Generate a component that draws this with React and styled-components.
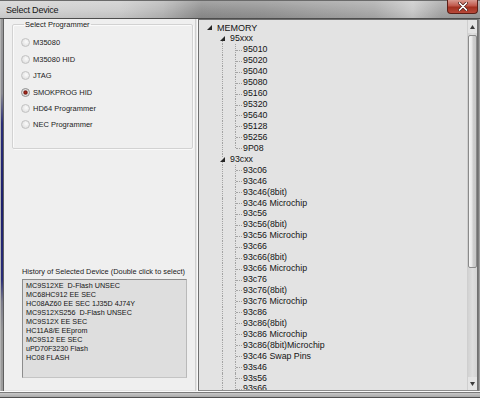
import React from 'react';
import styled, { createGlobalStyle } from 'styled-components';

const Global = createGlobalStyle`
  html, body { margin: 0; padding: 0; background: #fff; }
  body { width: 480px; height: 398px; overflow: hidden; }
  * { box-sizing: border-box; }
`;

const Window = styled.div`
  width: 480px;
  height: 398px;
  display: flex;
  flex-direction: column;
  background: #9c9c9c;
  overflow: hidden;
  font-family: "Liberation Sans", Arial, sans-serif;
`;

const TitleBar = styled.div`
  height: 19px;
  flex: none;
  display: flex;
  justify-content: space-between;
  align-items: flex-start;
  padding-left: 6px;
  border-top: 1px solid #6a6a6a;
  border-bottom: 1px solid #4d4d4d;
  background:
    linear-gradient(180deg, rgba(255,255,255,0.22) 0%, rgba(255,255,255,0.05) 55%, rgba(0,0,0,0.05) 100%),
    linear-gradient(90deg, #d2d2d2 0%, #cbcbcb 25%, #b5b5b5 34%, #8c8c8c 42%, #929292 55%, #9e9e9e 66%, #a9a9a9 78%, #c8c8c8 86%, #a4a4a4 92%, #9c9c9c 100%);
`;

const Title = styled.span`
  align-self: center;
  font-size: 9px;
  color: #141414;
  letter-spacing: -0.2px;
`;

const CloseButton = styled.div`
  width: 31px;
  height: 14px;
  margin-top: -1px;
  margin-right: 2px;
  border: 1px solid #5b1e16;
  border-top: none;
  border-radius: 0 0 4px 4px;
  background: linear-gradient(180deg, #d89a90 0%, #c0574a 45%, #a2301f 55%, #b8493a 100%);
  display: flex;
  align-items: center;
  justify-content: center;
`;

const Main = styled.div`
  flex: 1;
  min-height: 0;
  display: flex;
`;

const FrameLeft = styled.div`
  width: 4px;
  flex: none;
  border-left: 1px solid #b4b4b4;
  border-right: 1px solid #5f5f5f;
  background: linear-gradient(180deg, #9a9a9a 0%, #8a8a92 20%, #2a2d78 28%, #1d206c 50%, #2a2d78 70%, #7b7b8a 76%, #979797 84%, #9c9c9c 100%);
`;

const FrameRight = styled.div`
  width: 2px;
  flex: none;
  background: linear-gradient(90deg, #6a6a6a, #b0b0b0);
`;

const FrameBottom = styled.div`
  height: 7px;
  flex: none;
  border-top: 1px solid #fafafa;
  border-bottom: 1px solid #505050;
  background: linear-gradient(180deg, #7a7a7a 0%, #7a7a7a 14%, #c4c4c4 30%, #a8a8a8 100%);
`;

const LeftPane = styled.div`
  width: 191px;
  flex: none;
  display: flex;
  flex-direction: column;
  background: #efefef;
  padding: 1px 2px 12px 8px;
  border-bottom: 1px solid #e2e2e2;
`;

const GroupBox = styled.fieldset`
  margin: 0;
  padding: 5.8px 0 15px 8px;
  border: 1px solid #d2d2d2;
  box-shadow: inset 1px 1px 0 #fafafa, 1px 1px 0 #fafafa;
  border-radius: 2px;
  min-width: 0;
`;

const Legend = styled.legend`
  font-size: 7.5px;
  line-height: 9px;
  color: #1a1a1a;
  padding: 0 1px;
  margin-left: 3px;
`;

const RadioRow = styled.label`
  height: 16.4px;
  display: flex;
  align-items: center;
  gap: 3px;
  font-size: 7.5px;
  color: #1c1c1c;
`;

const RadioDot = styled.span`
  width: 9px;
  height: 9px;
  border-radius: 50%;
  flex: none;
  border: 1px solid ${p => (p.$checked ? '#8d8d8d' : '#c2c2c2')};
  background: ${p =>
    p.$checked
      ? 'radial-gradient(circle at 50% 50%, #b02a1c 0, #7a1a12 1.6px, #d9d9d9 2.6px, #f2f2f2 4px)'
      : 'radial-gradient(circle at 60% 40%, #fbfbfb 0, #e6e6e6 60%, #cfcfcf 100%)'};
`;

const HistorySection = styled.div`
  margin-top: auto;
  padding-left: 10px;
  padding-right: 6px;
  display: flex;
  flex-direction: column;
  gap: 3.5px;
`;

const HistoryLabel = styled.div`
  font-size: 7.4px;
  line-height: 9px;
  color: #1a1a1a;
  white-space: nowrap;
`;

const HistoryList = styled.div`
  height: 99px;
  background: #dedede;
  border: 1px solid #8c8c8c;
  border-right-color: #b9b9b9;
  border-bottom-color: #c4c4c4;
  padding: 1px 3px;
`;

const HistoryItem = styled.div`
  font-size: 7.2px;
  line-height: 9px;
  color: #151515;
  white-space: pre;
`;

const Splitter = styled.div`
  width: 3px;
  flex: none;
  background: #e6e6e6;
  border-left: 1px solid #d0d0d0;
  border-right: 1px solid #fbfbfb;
`;

const TreePane = styled.div`
  width: 280px;
  flex: none;
  display: flex;
  border: 1px solid #707070;
  border-bottom-color: #8c8c8c;
  background: #e3e3e3;
`;

const TreeContent = styled.div`
  flex: 1;
  min-width: 0;
  overflow: hidden;
  padding: 2.5px 0 0 3.5px;
`;

const Row = styled.div`
  height: 10.95px;
  display: flex;
  align-items: stretch;
  font-family: "Liberation Sans", Arial, sans-serif;
  font-size: ${p => (p.$top ? '9px' : '8.8px')};
  color: #141414;
  white-space: nowrap;
`;

const Cell = styled.span`
  width: 13px;
  flex: none;
  position: relative;
  display: flex;
  align-items: center;
  justify-content: center;
  &::before {
    content: '';
    position: absolute;
    left: 6px;
    top: ${p => (p.$kind === 'down' ? '50%' : '0')};
    bottom: ${p => (p.$kind === 'last' ? '50%' : '0')};
    border-left: 1px dotted #a3a3a3;
    display: ${p => (p.$kind === 'none' || p.$kind === 'exp' ? 'none' : 'block')};
  }
  &::after {
    content: '';
    position: absolute;
    left: 7px;
    width: 6px;
    top: 50%;
    border-top: 1px dotted #a3a3a3;
    display: ${p => (p.$kind === 'tee' || p.$kind === 'last' ? 'block' : 'none')};
  }
`;

const ExpGlyph = styled.svg`
  position: relative;
  z-index: 1;
  background: #e3e3e3;
`;

const Label = styled.span`
  line-height: 10.95px;
  padding-left: 1.5px;
`;

const Scrollbar = styled.div`
  width: 10px;
  flex: none;
  display: flex;
  flex-direction: column;
  background: linear-gradient(90deg, #d2d2d2, #dedede 50%, #d4d4d4);
  border-left: 1px solid #cfcfcf;
`;

const ScrollButton = styled.div`
  height: 13px;
  flex: none;
  display: flex;
  align-items: center;
  justify-content: center;
  background: #e4e4e4;
`;

const Thumb = styled.div`
  height: 233px;
  margin: 2px 0 0 0;
  flex: none;
  border: 1px solid #8a8a8a;
  border-radius: 2px;
  background: linear-gradient(90deg, #f4f4f4 0%, #e6e6e6 45%, #cfcfcf 55%, #c6c6c6 100%);
`;

const Track = styled.div`
  flex: 1;
`;

const Expander = () => (
  <ExpGlyph width="5" height="5" viewBox="0 0 5 5">
    <polygon points="5,0 5,5 0,5" fill="#262626" />
  </ExpGlyph>
);

const programmers = ['M35080', 'M35080 HID', 'JTAG', 'SMOKPROG HID', 'HD64 Programmer', 'NEC Programmer'];

const history = [
  'MC9S12XE  D-Flash UNSEC',
  'MC68HC912 EE SEC',
  'HC08AZ60 EE SEC 1J35D 4J74Y',
  'MC9S12XS256  D-Flash UNSEC',
  'MC9S12X EE SEC',
  'HC11A8/E EEprom',
  'MC9S12 EE SEC',
  'uPD70F3230 Flash',
  'HC08 FLASH',
];

const g95 = ['95010', '95020', '95040', '95080', '95160', '95320', '95640', '95128', '95256', '9P08'];
const g93 = [
  '93c06', '93c46', '93c46(8bit)', '93c46 Microchip', '93c56', '93c56(8bit)', '93c56 Microchip',
  '93c66', '93c66(8bit)', '93c66 Microchip', '93c76', '93c76(8bit)', '93c76 Microchip',
  '93c86', '93c86(8bit)', '93c86 Microchip', '93c86(8bit)Microchip', '93c46 Swap Pins',
  '93s46', '93s56', '93s66',
];

const rows = [
  { label: 'MEMORY', cells: ['exp'], top: true },
  { label: '95xxx', cells: ['none', 'expdown'] },
  ...g95.map((l, i) => ({ label: l, cells: ['none', 'full', i === g95.length - 1 ? 'last' : 'tee'] })),
  { label: '93cxx', cells: ['none', 'expfull'] },
  ...g93.map(l => ({ label: l, cells: ['none', 'full', 'tee'] })),
];

const TreeCell = ({ kind }) => {
  if (kind === 'exp') return <Cell $kind="exp"><Expander /></Cell>;
  if (kind === 'expdown') return <Cell $kind="down"><Expander /></Cell>;
  if (kind === 'expfull') return <Cell $kind="full"><Expander /></Cell>;
  return <Cell $kind={kind} />;
};

export default function App() {
  return (
    <>
      <Global />
      <Window>
        <TitleBar>
          <Title>Select Device</Title>
          <CloseButton>
            <svg width="10" height="9" viewBox="0 0 10 9">
              <path d="M1.5 1 L8.5 8 M8.5 1 L1.5 8" stroke="#4a1a14" strokeWidth="3" strokeLinecap="round" />
              <path d="M1.5 1 L8.5 8 M8.5 1 L1.5 8" stroke="#ffffff" strokeWidth="1.7" strokeLinecap="round" />
            </svg>
          </CloseButton>
        </TitleBar>
        <Main>
          <FrameLeft />
          <LeftPane>
            <GroupBox>
              <Legend>Select Programmer</Legend>
              {programmers.map(p => (
                <RadioRow key={p}>
                  <RadioDot $checked={p === 'SMOKPROG HID'} />
                  {p}
                </RadioRow>
              ))}
            </GroupBox>
            <HistorySection>
              <HistoryLabel>History of Selected Device (Double click to select)</HistoryLabel>
              <HistoryList>
                {history.map(h => (
                  <HistoryItem key={h}>{h}</HistoryItem>
                ))}
              </HistoryList>
            </HistorySection>
          </LeftPane>
          <Splitter />
          <TreePane>
            <TreeContent>
              {rows.map((r, i) => (
                <Row key={i} $top={r.top}>
                  {r.cells.map((c, j) => (
                    <TreeCell key={j} kind={c} />
                  ))}
                  <Label>{r.label}</Label>
                </Row>
              ))}
            </TreeContent>
            <Scrollbar>
              <ScrollButton>
                <svg width="5" height="4" viewBox="0 0 5 4"><polygon points="2.5,0 5,4 0,4" fill="#3a3a3a" /></svg>
              </ScrollButton>
              <Thumb />
              <Track />
              <ScrollButton>
                <svg width="5" height="4" viewBox="0 0 5 4"><polygon points="0,0 5,0 2.5,4" fill="#3a3a3a" /></svg>
              </ScrollButton>
            </Scrollbar>
          </TreePane>
          <FrameRight />
        </Main>
        <FrameBottom />
      </Window>
    </>
  );
}
